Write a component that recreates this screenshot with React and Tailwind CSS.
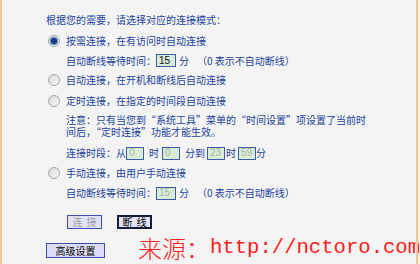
import React from "react";

const FONT = { fontFamily: '"Noto Sans CJK SC", "Noto Sans", sans-serif' };

const Radio = ({ checked }) => (
  <span className="relative mr-[6px] inline-block h-[12px] w-[12px] shrink-0 rounded-full border border-[#a8a8a8] bg-gradient-to-br from-[#d8d8d8] to-[#fafafa]">
    {checked && (
      <span className="absolute left-[2px] top-[2px] h-[6px] w-[6px] rounded-full bg-[#1c3f7a] ring-1 ring-[#5a8ac0]" />
    )}
  </span>
);

const Field = ({ value, w = "w-[20px]", disabled }) => (
  <span
    className={`inline-flex h-[13px] ${w} shrink-0 items-center border border-[#3b5ca8] bg-[#d9ecd6] pl-[2px] text-[10px] leading-none ${
      disabled ? "text-[#a9b5a8]" : "text-[#111]"
    }`}
    style={{ fontFamily: '"Liberation Sans", sans-serif' }}
  >
    {value}
  </span>
);

export default function App() {
  return (
    <div
      className="relative h-[264px] w-[420px] overflow-hidden whitespace-nowrap bg-[#f4f4f4] text-[10px] text-[#2243a0]"
      style={FONT}
    >
      <div className="absolute left-0 top-0 h-full w-[2px] bg-[#fcc48c]" />
      <div className="absolute left-[416px] top-0 h-full w-[2px] bg-[#fcc48c]" />

      <div className="flex flex-col pl-[46px] pt-[10px] leading-[12px]">
        <div className="flex h-[20px] items-center">根据您的需要，请选择对应的连接模式：</div>

        <div className="flex h-[21px] items-center pl-[2px]">
          <Radio checked />
          <span>按需连接，在有访问时自动连接</span>
        </div>

        <div className="flex h-[19px] items-center pl-[20px]">
          <span>自动断线等待时间：</span>
          <Field value="15" />
          <span className="ml-[3px]">分</span>
          <span className="ml-[8px]">（0 表示不自动断线）</span>
        </div>

        <div className="flex h-[20px] items-center pl-[2px]">
          <Radio />
          <span>自动连接，在开机和断线后自动连接</span>
        </div>

        <div className="flex h-[21px] items-center pl-[2px]">
          <Radio />
          <span>定时连接，在指定的时间段自动连接</span>
        </div>

        <div className="mt-[3px] pl-[20px] leading-[12px]">
          <div>注意：只有当您到“系统工具”菜单的“时间设置”项设置了当前时</div>
          <div>间后，“定时连接”功能才能生效。</div>
        </div>

        <div className="mt-[5px] flex h-[20px] items-center pl-[20px]">
          <span>连接时段：从</span>
          <Field value="0" w="w-[18px]" disabled />
          <span className="ml-[5px] mr-[3px]">时</span>
          <Field value="0" w="w-[18px]" disabled />
          <span className="ml-[5px] mr-[2px]">分到</span>
          <Field value="23" w="w-[18px]" disabled />
          <span className="ml-[1px] mr-[2px]">时</span>
          <Field value="59" w="w-[18px]" disabled />
          <span>分</span>
        </div>

        <div className="flex h-[19px] items-center pl-[2px]">
          <Radio />
          <span>手动连接，由用户手动连接</span>
        </div>

        <div className="flex h-[22px] items-center pl-[20px]">
          <span>自动断线等待时间：</span>
          <Field value="15" disabled />
          <span className="ml-[3px]">分</span>
          <span className="ml-[8px]">（0 表示不自动断线）</span>
        </div>

        <div className="mt-[11px] flex h-[14px] items-center pl-[21px]">
          <button className="flex h-[14px] w-[35px] items-center justify-center gap-[4px] border border-[#3b4fb0] bg-[#e2e2f6] text-[10px] leading-none text-[#a0a0a8]">
            <span>连</span>
            <span>接</span>
          </button>
          <button className="ml-[15px] flex h-[14px] w-[35px] items-center justify-center gap-[4px] border-2 border-[#141c3c] bg-[#e2e2f6] text-[10px] leading-none text-black">
            <span>断</span>
            <span>线</span>
          </button>
        </div>

        <div className="mt-[10px] flex h-[21px] items-end">
          <button className="mb-[2px] flex h-[15px] w-[59px] shrink-0 items-center justify-center border border-[#3b4fb0] bg-[#dcdcf6] text-[10px] leading-none text-black">
            高级设置
          </button>
          <span className="ml-[33px] shrink-0 text-[24px] font-light leading-[24px] text-[#ff2020]">来源：</span>
          <span
            className="shrink-0 text-[20.6px] leading-[24px] text-[#ff2020]"
            style={{ fontFamily: '"Liberation Mono", monospace' }}
          >
            http://nctoro.com
          </span>
        </div>
      </div>
    </div>
  );
}
